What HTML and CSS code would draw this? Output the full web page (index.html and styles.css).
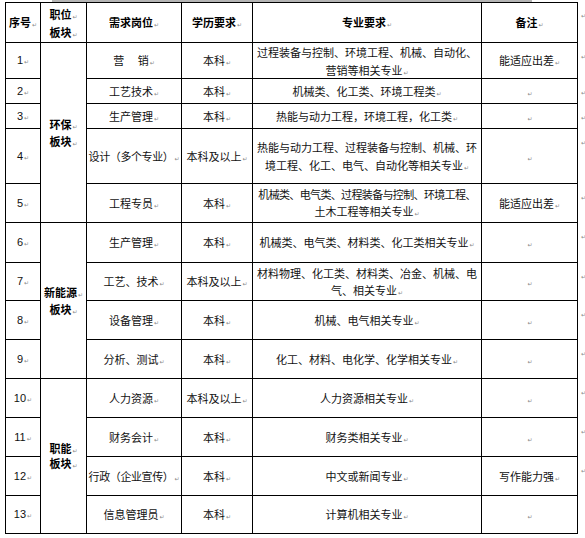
FILE: index.html
```html
<!DOCTYPE html>
<html lang="zh-CN">
<head>
<meta charset="utf-8">
<title>招聘岗位</title>
<link rel="stylesheet" href="styles.css">
</head>
<body>
<div class="topline"></div>
<div class="jobs">
  <div class="cell head first top"><span class="tx">序号<i class="pm">↵</i></span></div>
  <div class="cell head top lh18"><span class="tx">职位<i class="pm">↵</i><br>板块<i class="pm">↵</i></span></div>
  <div class="cell head top"><span class="tx">需求岗位<i class="pm">↵</i></span></div>
  <div class="cell head top"><span class="tx">学历要求<i class="pm">↵</i></span></div>
  <div class="cell head top"><span class="tx">专业要求<i class="pm">↵</i></span></div>
  <div class="cell head top"><span class="tx">备注<i class="pm">↵</i></span></div>
  <div class="end"><i class="pm">↵</i></div>

  <div class="cell first num"><span class="tx">1<i class="pm">↵</i></span></div>
  <div class="cell sect span5"><span class="tx">环保<i class="pm">↵</i><br>板块<i class="pm">↵</i></span></div>
  <div class="cell"><span class="tx">营　&nbsp;销<i class="pm">↵</i></span></div>
  <div class="cell"><span class="tx">本科<i class="pm">↵</i></span></div>
  <div class="cell lh18"><span class="tx">过程装备与控制、环境工程、机械、自动化、<br>营销等相关专业<i class="pm">↵</i></span></div>
  <div class="cell"><span class="tx">能适应出差<i class="pm">↵</i></span></div>
  <div class="end"><i class="pm">↵</i></div>

  <div class="cell first num"><span class="tx">2<i class="pm">↵</i></span></div>
  <div class="cell"><span class="tx">工艺技术<i class="pm">↵</i></span></div>
  <div class="cell"><span class="tx">本科<i class="pm">↵</i></span></div>
  <div class="cell"><span class="tx">机械类、化工类、环境工程类<i class="pm">↵</i></span></div>
  <div class="cell"><span class="tx"><i class="pm">↵</i></span></div>
  <div class="end"><i class="pm">↵</i></div>

  <div class="cell first num"><span class="tx">3<i class="pm">↵</i></span></div>
  <div class="cell"><span class="tx">生产管理<i class="pm">↵</i></span></div>
  <div class="cell"><span class="tx">本科<i class="pm">↵</i></span></div>
  <div class="cell"><span class="tx">热能与动力工程，环境工程，化工类<i class="pm">↵</i></span></div>
  <div class="cell"><span class="tx"><i class="pm">↵</i></span></div>
  <div class="end"><i class="pm">↵</i></div>

  <div class="cell first num"><span class="tx">4<i class="pm">↵</i></span></div>
  <div class="cell squeeze"><span class="tx">设计（多个专业）<i class="pm">↵</i></span></div>
  <div class="cell"><span class="tx">本科及以上<i class="pm">↵</i></span></div>
  <div class="cell lh18"><span class="tx">热能与动力工程、过程装备与控制、机械、环<br>境工程、化工、电气、自动化等相关专业<i class="pm">↵</i></span></div>
  <div class="cell"><span class="tx"><i class="pm">↵</i></span></div>
  <div class="end"><i class="pm">↵</i></div>

  <div class="cell first num"><span class="tx">5<i class="pm">↵</i></span></div>
  <div class="cell"><span class="tx">工程专员<i class="pm">↵</i></span></div>
  <div class="cell"><span class="tx">本科<i class="pm">↵</i></span></div>
  <div class="cell"><span class="tx"><span class="tight">机械类、电气类、过程装备与控制、环境工程、</span><br>土木工程等相关专业<i class="pm">↵</i></span></div>
  <div class="cell"><span class="tx">能适应出差<i class="pm">↵</i></span></div>
  <div class="end"><i class="pm">↵</i></div>

  <div class="cell first num"><span class="tx">6<i class="pm">↵</i></span></div>
  <div class="cell sect span4"><span class="tx">新能源<i class="pm">↵</i><br>板块<i class="pm">↵</i></span></div>
  <div class="cell"><span class="tx">生产管理<i class="pm">↵</i></span></div>
  <div class="cell"><span class="tx">本科<i class="pm">↵</i></span></div>
  <div class="cell"><span class="tx">机械类、电气类、材料类、化工类相关专业<i class="pm">↵</i></span></div>
  <div class="cell"><span class="tx"><i class="pm">↵</i></span></div>
  <div class="end"><i class="pm">↵</i></div>

  <div class="cell first num"><span class="tx">7<i class="pm">↵</i></span></div>
  <div class="cell"><span class="tx">工艺、技术<i class="pm">↵</i></span></div>
  <div class="cell"><span class="tx">本科及以上<i class="pm">↵</i></span></div>
  <div class="cell"><span class="tx">材料物理、化工类、材料类、冶金、机械、电<br>气、相关专业<i class="pm">↵</i></span></div>
  <div class="cell"><span class="tx"><i class="pm">↵</i></span></div>
  <div class="end"><i class="pm">↵</i></div>

  <div class="cell first num"><span class="tx">8<i class="pm">↵</i></span></div>
  <div class="cell"><span class="tx">设备管理<i class="pm">↵</i></span></div>
  <div class="cell"><span class="tx">本科<i class="pm">↵</i></span></div>
  <div class="cell"><span class="tx">机械、电气相关专业<i class="pm">↵</i></span></div>
  <div class="cell"><span class="tx"><i class="pm">↵</i></span></div>
  <div class="end"><i class="pm">↵</i></div>

  <div class="cell first num"><span class="tx">9<i class="pm">↵</i></span></div>
  <div class="cell"><span class="tx">分析、测试<i class="pm">↵</i></span></div>
  <div class="cell"><span class="tx">本科<i class="pm">↵</i></span></div>
  <div class="cell"><span class="tx">化工、材料、电化学、化学相关专业<i class="pm">↵</i></span></div>
  <div class="cell"><span class="tx"><i class="pm">↵</i></span></div>
  <div class="end"><i class="pm">↵</i></div>

  <div class="cell first num"><span class="tx">10<i class="pm">↵</i></span></div>
  <div class="cell sect span4 lh15"><span class="tx">职能<i class="pm">↵</i><br>板块<i class="pm">↵</i></span></div>
  <div class="cell"><span class="tx">人力资源<i class="pm">↵</i></span></div>
  <div class="cell"><span class="tx">本科及以上<i class="pm">↵</i></span></div>
  <div class="cell"><span class="tx">人力资源相关专业<i class="pm">↵</i></span></div>
  <div class="cell"><span class="tx"><i class="pm">↵</i></span></div>
  <div class="end"><i class="pm">↵</i></div>

  <div class="cell first num"><span class="tx">11<i class="pm">↵</i></span></div>
  <div class="cell"><span class="tx">财务会计<i class="pm">↵</i></span></div>
  <div class="cell"><span class="tx">本科<i class="pm">↵</i></span></div>
  <div class="cell"><span class="tx">财务类相关专业<i class="pm">↵</i></span></div>
  <div class="cell"><span class="tx"><i class="pm">↵</i></span></div>
  <div class="end"><i class="pm">↵</i></div>

  <div class="cell first num"><span class="tx">12<i class="pm">↵</i></span></div>
  <div class="cell squeeze"><span class="tx">行政（企业宣传）<i class="pm">↵</i></span></div>
  <div class="cell"><span class="tx">本科<i class="pm">↵</i></span></div>
  <div class="cell"><span class="tx">中文或新闻专业<i class="pm">↵</i></span></div>
  <div class="cell"><span class="tx">写作能力强<i class="pm">↵</i></span></div>
  <div class="end"><i class="pm">↵</i></div>

  <div class="cell first num"><span class="tx">13<i class="pm">↵</i></span></div>
  <div class="cell"><span class="tx">信息管理员<i class="pm">↵</i></span></div>
  <div class="cell"><span class="tx">本科<i class="pm">↵</i></span></div>
  <div class="cell"><span class="tx">计算机相关专业<i class="pm">↵</i></span></div>
  <div class="cell"><span class="tx"><i class="pm">↵</i></span></div>
  <div class="end"></div>
</div>
</body>
</html>
```

FILE: styles.css
```css
html, body {
  margin: 0;
  padding: 0;
  background: #ffffff;
}

body {
  font-family: "Noto Sans CJK SC", sans-serif;
  font-size: 11px;
  color: #111111;
}

.topline {
  margin-left: 52px;
  width: 480px;
  height: 2px;
  background: #b4b4b4;
}

.jobs {
  display: grid;
  grid-template-columns: 36px 46px 95px 71px 229px 96px 7px;
  grid-template-rows: 41px 36px 25px 25px 55px 39px 40px 38px 39px 39px 39px 39px 39px 38px;
  margin-left: 5px;
  width: 580px;
}

.cell {
  box-sizing: border-box;
  border-right: 1px solid #000;
  border-bottom: 1px solid #000;
  display: flex;
  align-items: center;
  justify-content: center;
  text-align: center;
  white-space: nowrap;
  line-height: 17px;
  overflow: visible;
}

.tx {
  display: block;
}

.cell.first {
  border-left: 1px solid #000;
}

.cell.top {
  border-top: 1px solid #000;
}

.end {
  padding: 8px 0 0 2px;
  line-height: 6px;
}

.head {
  font-weight: bold;
  color: #000;
}

.lh18 { line-height: 18px; }
.lh15 { line-height: 15px; }

.sect {
  font-weight: bold;
  color: #000;
}

.span5 { grid-row: span 5; }
.span4 { grid-row: span 4; }

.num {
  font-family: "Liberation Sans", "Noto Sans CJK SC", sans-serif;
}

.squeeze {
  letter-spacing: -0.4px;
}

.tight {
  letter-spacing: -0.65px;
}

.pm {
  font-style: normal;
  font-weight: normal;
  font-family: "DejaVu Sans", sans-serif;
  font-size: 6px;
  line-height: 0;
  color: #8a8a8a;
  letter-spacing: 0;
  margin-left: 1px;
}
```
